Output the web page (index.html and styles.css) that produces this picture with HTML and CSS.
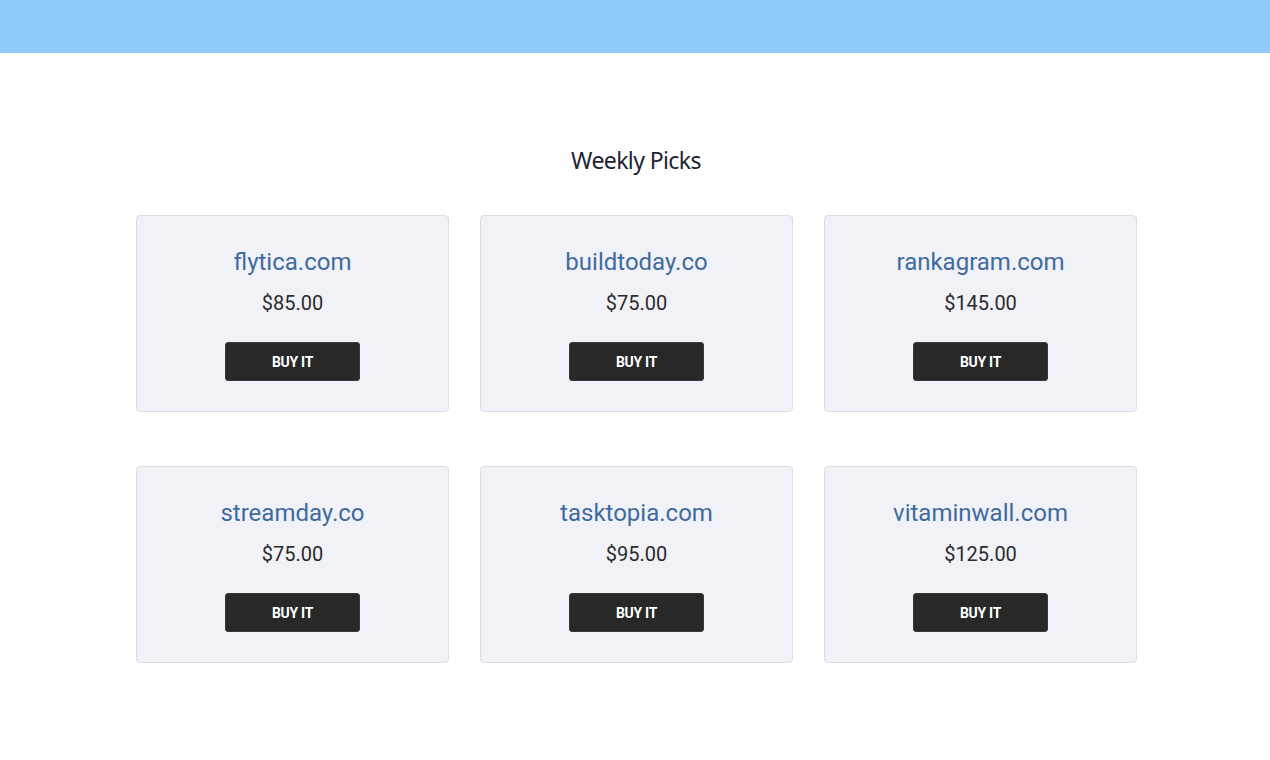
FILE: index.html
```html
<!DOCTYPE html>
<html>
<head>
<meta charset="utf-8">
<link rel="stylesheet" href="styles.css">
</head>
<body>
<header class="topbar"></header>
<main class="main">
  <h1 class="title">Weekly Picks</h1>
  <div class="grid">
    <div class="card"><div class="domain">flytica.com</div><div class="price">$85.00</div><button class="buy">BUY IT</button></div>
    <div class="card"><div class="domain">buildtoday.co</div><div class="price">$75.00</div><button class="buy">BUY IT</button></div>
    <div class="card"><div class="domain">rankagram.com</div><div class="price">$145.00</div><button class="buy">BUY IT</button></div>
    <div class="card"><div class="domain">streamday.co</div><div class="price">$75.00</div><button class="buy">BUY IT</button></div>
    <div class="card"><div class="domain">tasktopia.com</div><div class="price">$95.00</div><button class="buy">BUY IT</button></div>
    <div class="card"><div class="domain">vitaminwall.com</div><div class="price">$125.00</div><button class="buy">BUY IT</button></div>
  </div>
</main>
</body>
</html>
```
FILE: styles.css
```css
* { box-sizing: border-box; }
html, body { margin: 0; padding: 0; background: #fff; }
body { font-family: Roboto, "Liberation Sans", sans-serif; }
.topbar { height: 53px; background: #90caf9; }
.main { width: 1002px; margin: 0 auto; padding: 91px 0 0 2px; }
.title {
  margin: 0;
  text-align: center;
  font-family: "Noto Sans", "Open Sans", sans-serif;
  font-weight: 400;
  font-size: 23px;
  line-height: 32px;
  color: #1e2433;
  letter-spacing: -0.6px;
}
.grid {
  margin-top: 39px;
  display: grid;
  grid-template-columns: repeat(3, 313px);
  column-gap: 31px;
  row-gap: 54px;
}
.card {
  height: 197px;
  background: #f1f2f8;
  border: 1px solid #dcdde3;
  border-radius: 4px;
  display: flex;
  flex-direction: column;
  align-items: center;
  padding-top: 32px;
}
.domain {
  font-size: 24px;
  line-height: 28px;
  color: #3f6b9f;
}
.price {
  margin-top: 14px;
  font-size: 20px;
  line-height: 26px;
  color: #2b2b2b;
}
.buy {
  margin-top: 26px;
  width: 135px;
  height: 39px;
  background: #282828;
  color: #fff;
  border: 1px solid #3a3a3a;
  border-radius: 3px;
  font-family: Roboto, "Liberation Sans", sans-serif;
  font-weight: 700;
  font-size: 14px;
  letter-spacing: -0.3px;
  padding: 0;
}
```
